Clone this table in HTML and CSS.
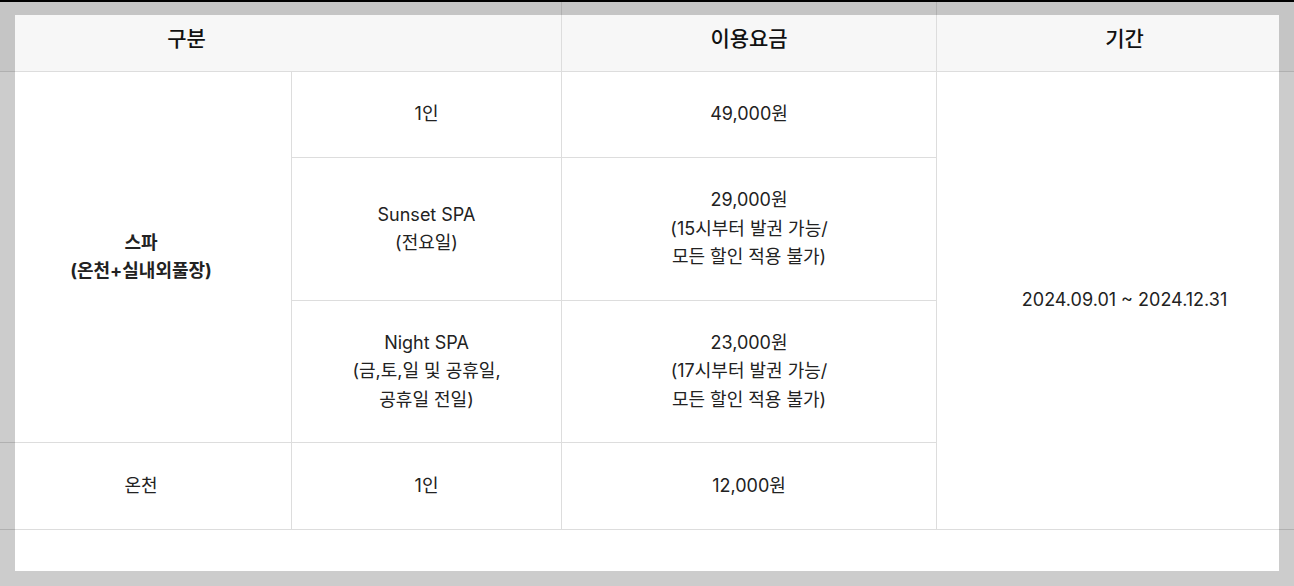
FILE: index.html
```html
<!DOCTYPE html>
<html lang="ko">
<head>
<meta charset="utf-8">
<title>이용요금</title>
<link rel="stylesheet" href="styles.css">
</head>
<body>
<div class="wrap">
  <table class="price">
    <colgroup>
      <col class="c1">
      <col class="c2">
      <col class="c3">
      <col class="c4">
    </colgroup>
    <thead>
      <tr>
        <th colspan="2" class="th-first">구분</th>
        <th>이용요금</th>
        <th>기간</th>
      </tr>
    </thead>
    <tbody>
      <tr class="r1">
        <td rowspan="3" class="strong">스파<br>(온천+실내외풀장)</td>
        <td>1인</td>
        <td>49,000원</td>
        <td rowspan="4">2024.09.01 ~ 2024.12.31</td>
      </tr>
      <tr class="r2">
        <td>Sunset SPA<br>(전요일)</td>
        <td>29,000원<br>(15시부터 발권 가능/<br>모든 할인 적용 불가)</td>
      </tr>
      <tr class="r3">
        <td>Night SPA<br>(금,토,일 및 공휴일,<br>공휴일 전일)</td>
        <td>23,000원<br>(17시부터 발권 가능/<br>모든 할인 적용 불가)</td>
      </tr>
      <tr class="r4">
        <td>온천</td>
        <td>1인</td>
        <td>12,000원</td>
      </tr>
    </tbody>
  </table>
</div>
<div class="frame"></div>
</body>
</html>
```

FILE: styles.css
```css
html, body {
  margin: 0;
  padding: 0;
  background: #fff;
  overflow: hidden;
}
body {
  width: 1294px;
  height: 586px;
  font-family: "Inter", "Noto Sans CJK KR", sans-serif;
  color: #222;
}
.wrap {
  margin-left: -10px;
  width: 1322px;
}
.price {
  width: 1322px;
  border-collapse: collapse;
  table-layout: fixed;
  border-top: 2px solid #000;
}
.c1 { width: 301px; }
.c2 { width: 270px; }
.c3 { width: 375px; }
.c4 { width: 376px; }
.price th {
  background: #f7f7f7;
  height: 69px;
  padding: 0;
  font-family: "Noto Sans CJK KR", sans-serif;
  font-size: 21px;
  font-weight: 500;
  text-align: center;
  vertical-align: middle;
  border: 1px solid #ddd;
  border-top: 0;
  color: #111;
}
.price th.th-first {
  padding-right: 179px;
}
.price td {
  padding: 0 6px;
  font-size: 18px;
  font-weight: 400;
  line-height: 28.5px;
  text-align: center;
  vertical-align: middle;
  border: 1px solid #ddd;
}
.price td.strong {
  font-weight: 700;
}
.r1 td { height: 85px; }
.r2 td { height: 142px; }
.r3 td { height: 141px; }
.r4 td { height: 86px; }
.frame {
  position: fixed;
  inset: 0;
  border: 15px solid rgba(0, 0, 0, 0.2);
  pointer-events: none;
}
```
